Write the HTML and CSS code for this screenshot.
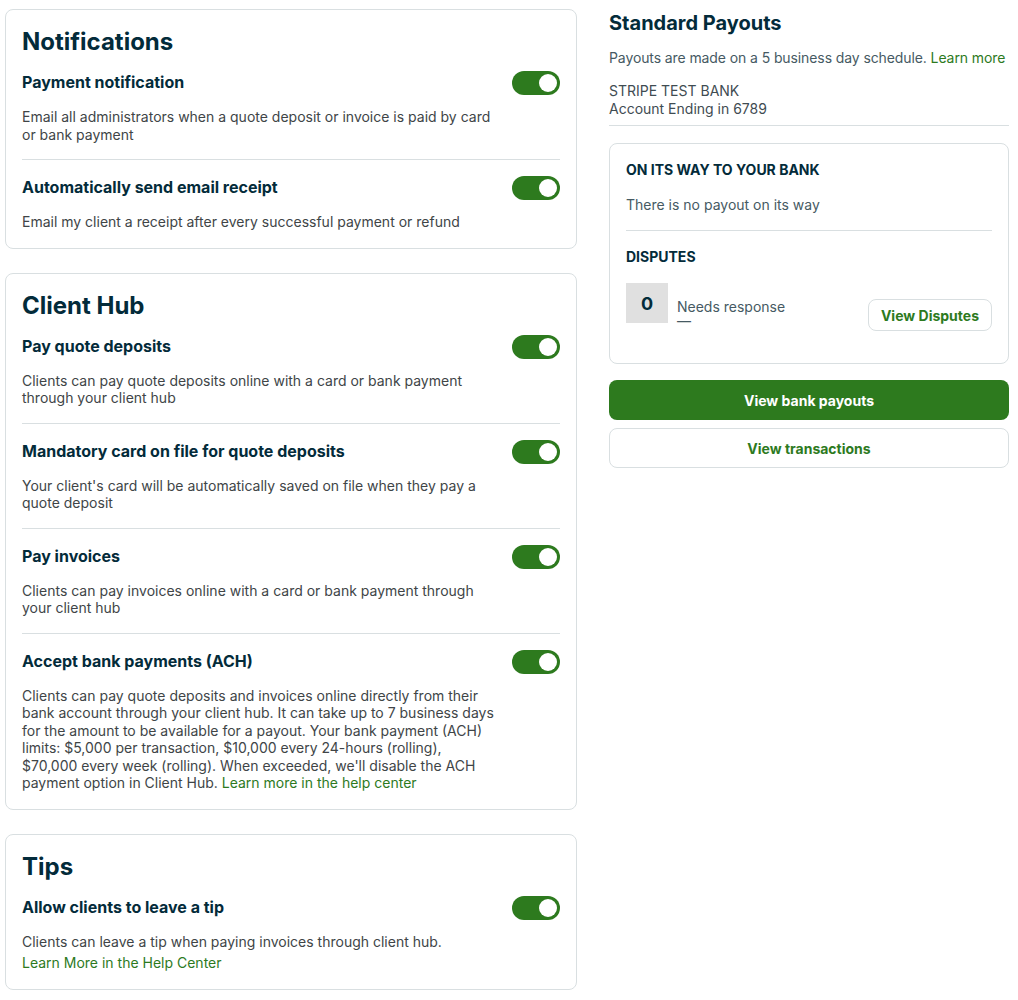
FILE: index.html
```html
<!DOCTYPE html>
<html lang="en">
<head>
  <meta charset="UTF-8" />
  <title>Payment settings</title>
  <link rel="stylesheet" href="styles.css">
</head>
<body>
<div class="page">

  <div class="main-col">
    <!-- Notifications -->
    <section class="card">
      <h2>Notifications</h2>
      <div class="setting">
        <div class="setting-head">
          <h3>Payment notification</h3>
          <span class="toggle"></span>
        </div>
        <p class="desc">Email all administrators when a quote deposit or invoice is paid by card or bank payment</p>
      </div>
      <div class="setting">
        <div class="setting-head">
          <h3>Automatically send email receipt</h3>
          <span class="toggle"></span>
        </div>
        <p class="desc">Email my client a receipt after every successful payment or refund</p>
      </div>
    </section>

    <!-- Client Hub -->
    <section class="card">
      <h2>Client Hub</h2>
      <div class="setting">
        <div class="setting-head">
          <h3>Pay quote deposits</h3>
          <span class="toggle"></span>
        </div>
        <p class="desc">Clients can pay quote deposits online with a card or bank payment through your client hub</p>
      </div>
      <div class="setting">
        <div class="setting-head">
          <h3>Mandatory card on file for quote deposits</h3>
          <span class="toggle"></span>
        </div>
        <p class="desc">Your client's card will be automatically saved on file when they pay a quote deposit</p>
      </div>
      <div class="setting">
        <div class="setting-head">
          <h3>Pay invoices</h3>
          <span class="toggle"></span>
        </div>
        <p class="desc">Clients can pay invoices online with a card or bank payment through your client hub</p>
      </div>
      <div class="setting">
        <div class="setting-head">
          <h3>Accept bank payments (ACH)</h3>
          <span class="toggle"></span>
        </div>
        <p class="desc">Clients can pay quote deposits and invoices online directly from their bank account through your client hub. It can take up to 7 business days for the amount to be available for a payout. Your bank payment (ACH) limits: $5,000 per transaction, $10,000 every 24-hours (rolling), $70,000 every week (rolling). When exceeded, we'll disable the ACH payment option in Client Hub. <a href="#">Learn more in the help center</a></p>
      </div>
    </section>

    <!-- Tips -->
    <section class="card">
      <h2>Tips</h2>
      <div class="setting">
        <div class="setting-head">
          <h3>Allow clients to leave a tip</h3>
          <span class="toggle"></span>
        </div>
        <p class="desc">Clients can leave a tip when paying invoices through client hub.</p>
        <a class="help-link" href="#">Learn More in the Help Center</a>
      </div>
    </section>
  </div>

  <aside class="side-col">
    <h2 class="side-title">Standard Payouts</h2>
    <p class="side-text schedule">Payouts are made on a 5 business day schedule. <a href="#">Learn more</a></p>
    <p class="bank">STRIPE TEST BANK<br>Account Ending in 6789</p>

    <div class="payout-card">
      <h4>On its way to your bank</h4>
      <p class="side-text empty">There is no payout on its way</p>
      <h4>Disputes</h4>
      <div class="disputes">
        <span class="count">0</span>
        <div class="count-label">
          <span>Needs response</span>
          <span class="dash">—</span>
        </div>
        <button class="btn btn-small">View Disputes</button>
      </div>
    </div>

    <button class="btn btn-primary">View bank payouts</button>
    <button class="btn btn-outline">View transactions</button>
  </aside>

</div>
</body>
</html>
```

FILE: styles.css
```css
html, body {
  margin: 0;
  padding: 0;
  background: #fff;
  font-family: Inter, "Noto Sans", sans-serif;
  color: #032b3a;
}
.page {
  display: flex;
  align-items: flex-start;
  gap: 32px;
  padding: 9px 0 0 5px;
}
.main-col {
  width: 572px;
  display: flex;
  flex-direction: column;
  gap: 24px;
}
.card {
  border: 1px solid #d9dfe1;
  border-radius: 8px;
  padding: 17px 16px 17px;
}
.card h2 {
  margin: 0 0 14px;
  font-size: 24px;
  line-height: 30px;
  font-weight: 700;
}
.setting + .setting {
  border-top: 1px solid #d9dfe1;
  margin-top: 16px;
  padding-top: 16px;
}
.setting-head {
  display: flex;
  align-items: center;
  justify-content: space-between;
  height: 24px;
}
.setting-head h3 {
  margin: -2px 0 0;
  font-size: 16px;
  font-weight: 700;
  line-height: 22px;
}
.toggle {
  position: relative;
  width: 48px;
  height: 24px;
  border-radius: 12px;
  background: #2d7a1e;
}
.toggle::after {
  content: "";
  position: absolute;
  top: 3px;
  right: 3px;
  width: 18px;
  height: 18px;
  border-radius: 50%;
  background: #fff;
}
.desc {
  margin: 13px 0 0;
  padding-right: 60px;
  font-size: 14px;
  line-height: 17.5px;
  color: #404547;
}
a {
  color: #2d7a1e;
  text-decoration: none;
}
.help-link {
  display: block;
  margin-top: 4px;
  font-size: 14px;
  line-height: 17.5px;
}

.side-col {
  width: 400px;
  display: flex;
  flex-direction: column;
}
.side-title {
  margin: 0;
  font-size: 20px;
  line-height: 28px;
  font-weight: 700;
}
.side-text {
  margin: 12px 0 0;
  font-size: 14px;
  line-height: 18px;
  color: #465a63;
}
.schedule {
  letter-spacing: -0.1px;
  white-space: nowrap;
}
.bank {
  margin: 15px 0 0;
  padding-bottom: 8px;
  border-bottom: 1px solid #d9dfe1;
  font-size: 14px;
  line-height: 17.5px;
  color: #3f4c52;
}
.payout-card {
  margin-top: 17px;
  border: 1px solid #d9dfe1;
  border-radius: 8px;
  padding: 16px;
}
.payout-card h4 {
  margin: 0;
  font-size: 14px;
  line-height: 20px;
  font-weight: 700;
  text-transform: uppercase;
}
.payout-card .empty {
  margin: 16px 0;
  padding-bottom: 16px;
  border-bottom: 1px solid #d9dfe1;
}
.disputes {
  display: flex;
  align-items: center;
  height: 64px;
  margin-top: 16px;
}
.count {
  align-self: flex-start;
  width: 42px;
  height: 40px;
  display: flex;
  align-items: center;
  justify-content: center;
  background: #e0e0e0;
  font-size: 18px;
  font-weight: 700;
}
.count-label {
  align-self: flex-start;
  display: flex;
  flex-direction: column;
  align-items: flex-start;
  margin-left: 9px;
  padding-top: 15px;
  font-size: 14px;
  line-height: 17px;
  color: #465a63;
}
.dash {
  font-size: 14px;
  line-height: 12px;
}
.btn {
  font-family: Inter, "Noto Sans", sans-serif;
  font-size: 14px;
  font-weight: 700;
  border-radius: 8px;
  cursor: pointer;
}
.btn-small {
  margin-left: auto;
  height: 32px;
  padding: 0 12px;
  background: #fff;
  color: #2d7a1e;
  border: 1px solid #d9dfe1;
}
.btn-primary {
  margin-top: 16px;
  height: 40px;
  background: #2d7a1e;
  color: #fff;
  border: none;
}
.btn-outline {
  margin-top: 8px;
  height: 40px;
  background: #fff;
  color: #2d7a1e;
  border: 1px solid #d9dfe1;
}
```
